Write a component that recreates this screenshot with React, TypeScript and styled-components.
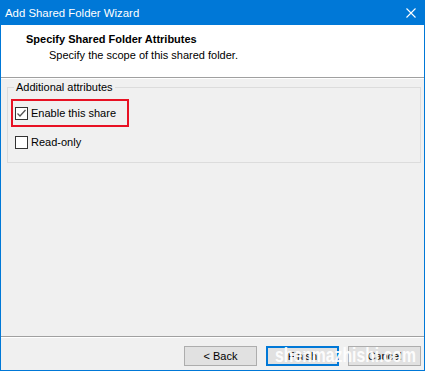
import styled, { createGlobalStyle } from "styled-components";

const GlobalStyle = createGlobalStyle`
  html, body {
    margin: 0;
    padding: 0;
    background: #ffffff;
    overflow: hidden;
  }
  * {
    box-sizing: border-box;
  }
`;

const Window = styled.div`
  position: relative;
  width: 425px;
  height: 371px;
  display: flex;
  flex-direction: column;
  border: 1px solid #0078d7;
  border-top: none;
  background: #f0f0f0;
  font-family: "Liberation Sans", Arial, sans-serif;
  font-size: 11px;
  color: #000;
  overflow: hidden;
`;

const TitleBar = styled.div`
  height: 25px;
  margin: 0 -1px;
  display: flex;
  align-items: center;
  justify-content: space-between;
  padding: 0 9px 0 5px;
  background: #0078d7;
  color: #ffffff;
  font-size: 11.4px;
`;

const CloseIcon = () => (
  <svg width="10" height="10" viewBox="0 0 10 10">
    <path d="M0.5 0.5 L9.5 9.5 M9.5 0.5 L0.5 9.5" stroke="#fff" strokeWidth="1.1" />
  </svg>
);

const Header = styled.div`
  height: 53px;
  background: #ffffff;
  padding: 6px 0 0 25px;
  border-bottom: 1px solid #a0a0a0;
`;

const HeaderTitle = styled.div`
  font-weight: bold;
  line-height: 16px;
`;

const HeaderText = styled.div`
  padding-left: 23px;
  line-height: 16px;
`;

const Body = styled.div`
  flex: 1;
  padding: 1px 3px 0 6px;
  border-top: 1px solid #ffffff;
  border-bottom: 1px solid #a0a0a0;
`;

const GroupBox = styled.fieldset`
  margin: 0;
  padding: 5px 0 6px 3px;
  border: 1px solid #dcdcdc;
  display: flex;
  flex-direction: column;
  gap: 1px;
`;

const Legend = styled.legend`
  padding: 0 2px;
  margin-left: 3px;
  line-height: 14px;
`;

const CheckRow = styled.label<{ $highlight?: boolean }>`
  display: flex;
  align-items: center;
  gap: 3px;
  width: 118px;
  height: 28px;
  padding-left: 2px;
  white-space: nowrap;
  border: 2px solid ${(p) => (p.$highlight ? "#e81123" : "transparent")};
`;

const Box = styled.span`
  flex: none;
  width: 13px;
  height: 13px;
  border: 1px solid #333333;
  background: #ffffff;
  display: flex;
  align-items: center;
  justify-content: center;
`;

const CheckMark = () => (
  <svg width="11" height="11" viewBox="0 0 11 11">
    <path d="M1.5 5.5 L4 8 L9.5 2" stroke="#555" strokeWidth="1.3" fill="none" />
  </svg>
);

const Footer = styled.div`
  height: 33px;
  display: flex;
  justify-content: flex-end;
  align-items: flex-start;
  gap: 9px;
  padding: 8px 3px 0 0;
  border-top: 1px solid #ffffff;
`;

const Button = styled.button<{ $primary?: boolean }>`
  width: 73px;
  height: 20px;
  padding: 0;
  font-family: inherit;
  font-size: 11px;
  color: #000;
  background: #e1e1e1;
  border: ${(p) => (p.$primary ? "2px solid #0078d7" : "1px solid #adadad")};
`;

const Watermark = styled.div`
  position: absolute;
  left: 274px;
  top: 343px;
  line-height: 24px;
  font-family: "Liberation Sans", Arial, sans-serif;
  font-weight: bold;
  font-size: 21px;
  color: rgba(255, 255, 255, 0.92);
  white-space: nowrap;
  transform: scaleX(0.75);
  transform-origin: left center;
  pointer-events: none;
`;

export default function App() {
  return (
    <>
      <GlobalStyle />
      <Window>
        <TitleBar>
          <span>Add Shared Folder Wizard</span>
          <CloseIcon />
        </TitleBar>
        <Header>
          <HeaderTitle>Specify Shared Folder Attributes</HeaderTitle>
          <HeaderText>Specify the scope of this shared folder.</HeaderText>
        </Header>
        <Body>
          <GroupBox>
            <Legend>Additional attributes</Legend>
            <CheckRow $highlight>
              <Box>
                <CheckMark />
              </Box>
              Enable this share
            </CheckRow>
            <CheckRow>
              <Box />
              Read-only
            </CheckRow>
          </GroupBox>
        </Body>
        <Footer>
          <Button>&lt; Back</Button>
          <Button $primary>Finish</Button>
          <Button>Cancel</Button>
        </Footer>
        <Watermark>shenmazhishi.com</Watermark>
      </Window>
    </>
  );
}
